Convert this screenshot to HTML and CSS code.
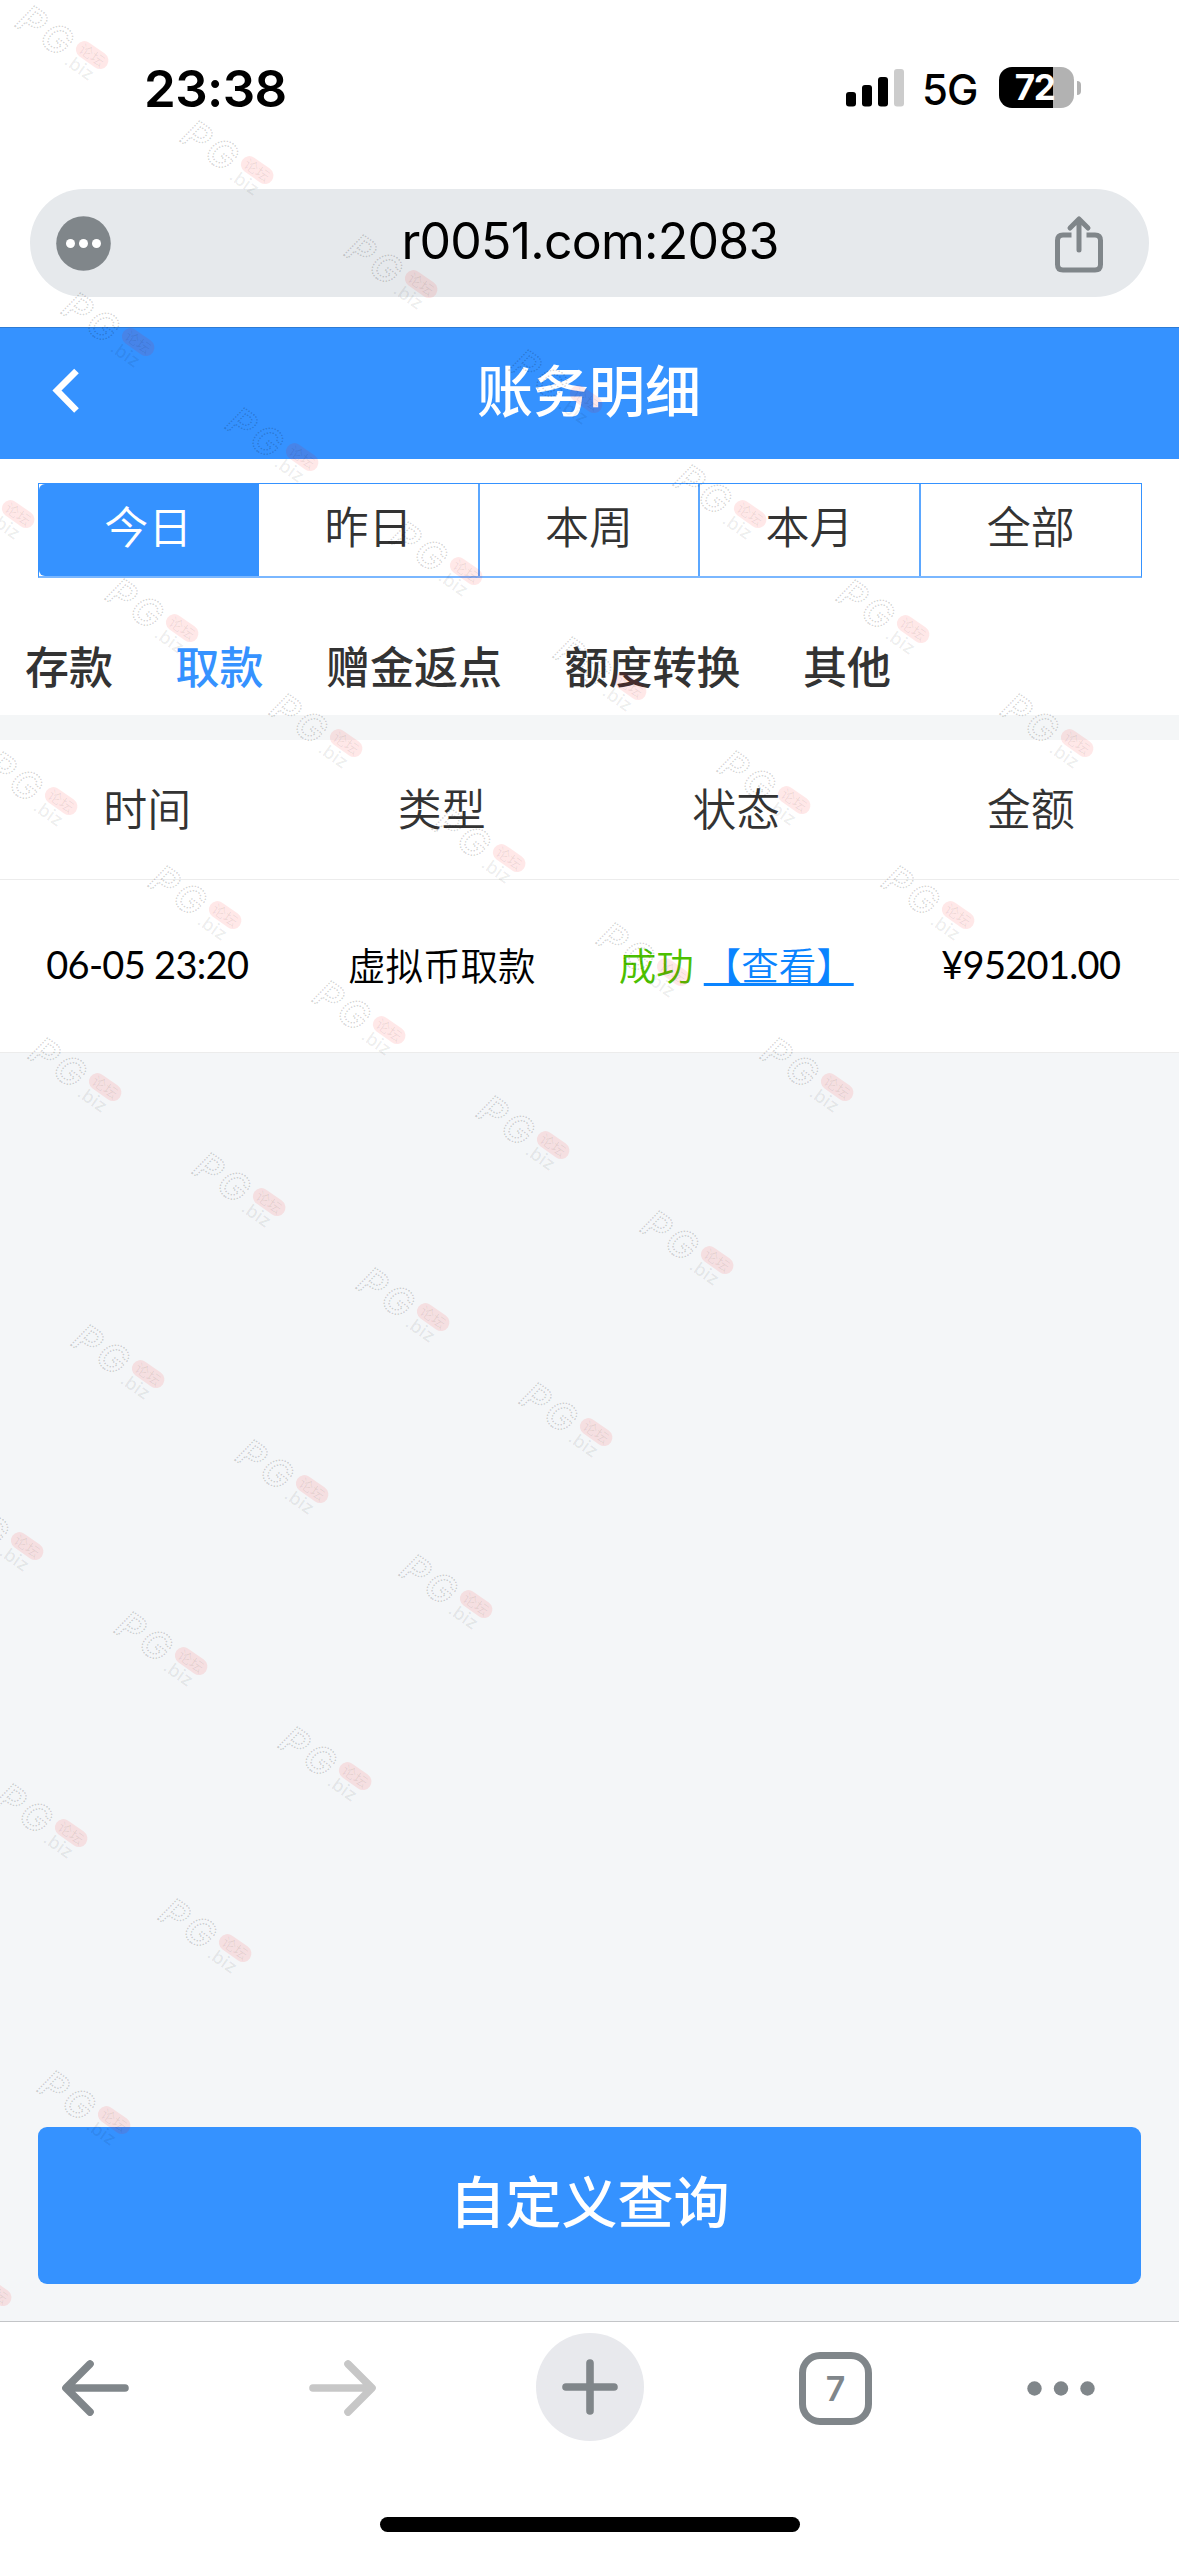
FILE: index.html
```html
<!DOCTYPE html>
<html lang="zh-CN">
<head>
<meta charset="utf-8">
<title>账务明细</title>
<link rel="stylesheet" href="styles.css">
</head>
<body>
<div class="screen">
  <div class="status-bar">
    <span class="clock">23:38</span>
    <div class="status-right">
      <svg class="signal" width="58" height="38" viewBox="0 0 58 38">
        <rect x="0" y="23" width="10" height="14.5" rx="3"/>
        <rect x="16" y="16" width="10" height="21.5" rx="3"/>
        <rect x="32" y="8" width="10" height="29.5" rx="3"/>
        <rect x="48" y="0" width="10" height="37.5" rx="3" fill="#ccc"/>
      </svg>
      <span class="network">5G</span>
      <div class="battery"><span class="battery-body">72</span><span class="battery-cap"></span></div>
    </div>
  </div>

  <div class="address-bar">
    <svg width="55" height="55" viewBox="0 0 55 55">
      <circle cx="27.5" cy="27.5" r="27.3" fill="#80868a"/>
      <g fill="#fff"><circle cx="14.5" cy="27.5" r="4.5"/><circle cx="27.5" cy="27.5" r="4.5"/><circle cx="40.5" cy="27.5" r="4.5"/></g>
    </svg>
    <span class="url">r0051.com:2083</span>
    <svg width="48" height="65" viewBox="0 -8 48 65" fill="none" stroke="#80868a" stroke-width="5">
      <path d="M16.500 16H8Q2.500 16 2.500 21.500V45.500Q2.500 51 8 51H40Q45.500 51 45.500 45.500V21.500Q45.500 16 40 16H31.500"/>
      <path d="M24 31V1M15 9L24 0L33 9" stroke-linecap="round" stroke-linejoin="round"/>
    </svg>
  </div>

  <header class="nav">
    <svg class="back" width="28" height="46" viewBox="0 0 28 46" fill="none" stroke="#fff" stroke-width="6.500"><path d="M24.500 3L5 22.500L24.500 42.500"/></svg>
    <h1 class="title">账务明细</h1>
  </header>

  <div class="filters">
    <div class="range">
      <span class="range-item active">今日</span>
      <span class="range-item">昨日</span>
      <span class="range-item">本周</span>
      <span class="range-item">本月</span>
      <span class="range-item">全部</span>
    </div>
    <div class="kinds">
      <span>存款</span>
      <span class="selected">取款</span>
      <span>赠金返点</span>
      <span>额度转换</span>
      <span>其他</span>
    </div>
  </div>

  <div class="table">
    <div class="row head"><span>时间</span><span>类型</span><span>状态</span><span>金额</span></div>
    <div class="row"><span class="num">06-05 23:20</span><span>虚拟币取款</span><span class="state"><span class="ok">成功</span><a class="link">【查看】</a></span><span class="num">¥95201.00</span></div>
  </div>

  <div class="content"><div class="query">自定义查询</div></div>

  <div class="toolbar">
    <svg width="68" height="56" viewBox="0 0 68 56" fill="none" stroke="#80868a" stroke-width="7.600" stroke-linecap="round" stroke-linejoin="round"><path d="M63 28H5M28 4L4 28L28 52"/></svg>
    <svg width="68" height="56" viewBox="0 0 68 56" fill="none" stroke="#c7c7c7" stroke-width="7.600" stroke-linecap="round" stroke-linejoin="round"><path d="M4 28H62M39 4L63 28L39 52"/></svg>
    <svg class="new-tab" width="108" height="108" viewBox="0 0 108 108" fill="none" stroke="#80868a" stroke-width="7.600" stroke-linecap="round"><circle cx="54" cy="54" r="54" fill="#e8e9ed" stroke="none"/><path d="M54 30V78M30 54H78"/></svg>
    <div class="tab-count">7</div>
    <svg width="68" height="15" viewBox="0 0 68 15" fill="#80868a"><circle cx="7.500" cy="7.500" r="7.200"/><circle cx="34" cy="7.500" r="7.200"/><circle cx="60.500" cy="7.500" r="7.200"/></svg>
  </div>
  <div class="home"></div>

  <svg class="watermarks" width="1179" height="2556" viewBox="0 0 1179 2556">
    <defs>
      <g id="mark">
        <g transform="rotate(35)">
          <text class="mark-big" x="-3" y="27">PG</text>
          <rect x="60" y="-2" width="36" height="17" rx="8.500" fill="#f00" fill-opacity=".09"/>
          <text class="mark-pill" x="64" y="12">论坛</text>
          <text class="mark-small" x="59" y="30">.biz</text>
        </g>
      </g>
    </defs>
    <use href="#mark" x="32" y="5"/><use href="#mark" x="197" y="120"/><use href="#mark" x="361" y="234"/><use href="#mark" x="526" y="349"/><use href="#mark" x="690" y="464"/><use href="#mark" x="853" y="579"/><use href="#mark" x="1017" y="693"/>
    <use href="#mark" x="78" y="292"/><use href="#mark" x="242" y="407"/><use href="#mark" x="406" y="521"/><use href="#mark" x="570" y="636"/><use href="#mark" x="734" y="750"/><use href="#mark" x="898" y="865"/>
    <use href="#mark" x="-42" y="464"/><use href="#mark" x="122" y="578"/><use href="#mark" x="286" y="693"/><use href="#mark" x="449" y="808"/><use href="#mark" x="613" y="922"/><use href="#mark" x="777" y="1037"/>
    <use href="#mark" x="1" y="751"/><use href="#mark" x="165" y="865"/><use href="#mark" x="329" y="980"/><use href="#mark" x="493" y="1095"/><use href="#mark" x="657" y="1210"/>
    <use href="#mark" x="45" y="1037"/><use href="#mark" x="209" y="1152"/><use href="#mark" x="373" y="1267"/><use href="#mark" x="536" y="1382"/>
    <use href="#mark" x="88" y="1324"/><use href="#mark" x="252" y="1439"/><use href="#mark" x="416" y="1554"/>
    <use href="#mark" x="-33" y="1496"/><use href="#mark" x="131" y="1611"/><use href="#mark" x="295" y="1726"/>
    <use href="#mark" x="11" y="1783"/><use href="#mark" x="175" y="1898"/>
    <use href="#mark" x="54" y="2070"/><use href="#mark" x="-65" y="2242"/>
  </svg>
</div>
</body>
</html>
```

FILE: styles.css
```css
* { box-sizing: border-box; }
body {
  margin: 0;
  background: #fff;
  color: #333;
  font-family: "Noto Sans CJK SC", sans-serif;
}
.screen {
  position: relative;
  display: flex;
  flex-direction: column;
  width: 1179px;
  height: 2556px;
  overflow: hidden;
}
svg { display: block; flex: none; }

.status-bar {
  display: flex;
  justify-content: space-between;
  align-items: center;
  height: 175px;
  padding: 0 98px 0 144px;
  color: #000;
  font-family: Inter, sans-serif;
}
.clock { padding-top: 2px; font-size: 51px; font-weight: 600; line-height: 60px; letter-spacing: -.6px; }
.status-right { display: flex; align-items: center; }
.network { margin: 3px 0 0 18px; width: 55px; font-size: 42px; font-weight: 450; letter-spacing: -1px; white-space: nowrap; }
.battery { display: flex; align-items: center; gap: 3px; margin-left: 22px; }
.battery-body {
  width: 75px;
  height: 41px;
  padding-right: 4px;
  border-radius: 13px;
  background: linear-gradient(to right, #000 54px, #b2b2b2 54px);
  color: #fff;
  font-size: 35px;
  font-weight: 700;
  line-height: 41px;
  text-align: center;
  letter-spacing: -1.5px;
}
.battery-cap { width: 4px; height: 14px; border-radius: 0 7px 7px 0; background: #b2b2b2; }

.address-bar {
  display: flex;
  justify-content: space-between;
  align-items: center;
  height: 108px;
  margin: 14px 30px 30px;
  padding: 0 46px 0 26px;
  border-radius: 54px;
  background: #e6e9ec;
}
.url { margin: -4px 0 0 14px; color: #000; font-family: Inter, sans-serif; font-size: 50px; line-height: 60px; letter-spacing: -.75px; }

.nav {
  display: grid;
  grid-template-columns: 105px 1fr 105px;
  align-items: center;
  height: 132px;
  border-top: 1px solid #2d7bd5;
  background: #3592ff;
}
.back { margin: 0 0 6px 52px; }
.title {
  margin: 0 1px 12px 0;
  color: #fff;
  font-size: 56px;
  font-weight: 500;
  line-height: 80px;
  text-align: center;
}

.filters { height: 256px; padding-top: 24px; }
.range {
  display: grid;
  grid-template-columns: repeat(5, 1fr);
  height: 95px;
  margin: 0 37px 0 38px;
  border: 1px solid #3592ff;
  border-bottom: 2px solid #7ab7ff;
}
.range-item { border-right: 2px solid #5ba7ff; font-size: 44px; font-weight: 350; line-height: 83px; text-align: center; }
.range-item:last-child { border-right: 0; }
.range-item.active { border-radius: 6px 0 0 6px; border-color: #3592ff; background: #3592ff; color: #fff; }
.kinds {
  display: flex;
  gap: 62.5px;
  padding: 55px 25px 0;
  font-size: 44px;
  font-weight: 500;
  line-height: 64px;
}
.selected { color: #3592ff; }

.table { border-top: 25px solid #f4f6f7; }
.row {
  display: grid;
  grid-template-columns: repeat(4, 1fr);
  align-items: center;
  height: 173px;
  padding: 0 1px 5px 0;
  border-bottom: 1px solid #ececec;
  color: #000;
  font-size: 37.500px;
  font-weight: 350;
  text-align: center;
}
.row.head { height: 140px; padding-bottom: 6px; color: #333; font-size: 44px; }
.num { font-family: Lato, sans-serif; font-size: 38px; font-weight: 400; letter-spacing: -.7px; white-space: nowrap; }
.state { display: flex; justify-content: center; gap: 10px; }
.ok { color: #4cc000; }
.link {
  color: #0a84ff;
  text-decoration: underline;
  text-decoration-thickness: 3px;
  text-underline-offset: 3px;
  text-decoration-skip-ink: none;
}

.content {
  display: flex;
  flex-direction: column;
  justify-content: flex-end;
  flex: 1;
  padding: 0 38px 37px;
  background: #f4f6f8;
}
.query {
  height: 157px;
  border-radius: 9px;
  background: #3592ff;
  color: #fff;
  font-size: 56px;
  font-weight: 500;
  line-height: 143px;
  text-align: center;
}

.toolbar {
  display: grid;
  grid-template-columns: 191px 303px 192px 299px 152px;
  align-items: center;
  justify-items: center;
  height: 133px;
  border-top: 1px solid #c3c5c8;
  background: #fff;
}
.new-tab { margin-bottom: 2px; }
.tab-count {
  width: 73px;
  height: 73px;
  border: 7px solid #80868a;
  border-radius: 21px;
  color: #80868a;
  font-family: Inter, sans-serif;
  font-size: 34px;
  font-weight: 600;
  line-height: 60px;
  text-align: center;
}
.home { width: 420px; height: 15px; margin: 63px auto 24px; border-radius: 8px; background: #000; }

.watermarks { position: absolute; left: 0; top: 0; pointer-events: none; }
.mark-big {
  fill: none;
  stroke: #000;
  stroke-opacity: .18;
  stroke-width: 1.5px;
  stroke-dasharray: 1.5 1.5;
  font: italic 600 38px Inter, sans-serif;
  letter-spacing: 4px;
}
.mark-pill { fill: #000; fill-opacity: .07; font-size: 14px; }
.mark-small { fill: #000; fill-opacity: .08; font: 500 18px Inter, sans-serif; }
```
